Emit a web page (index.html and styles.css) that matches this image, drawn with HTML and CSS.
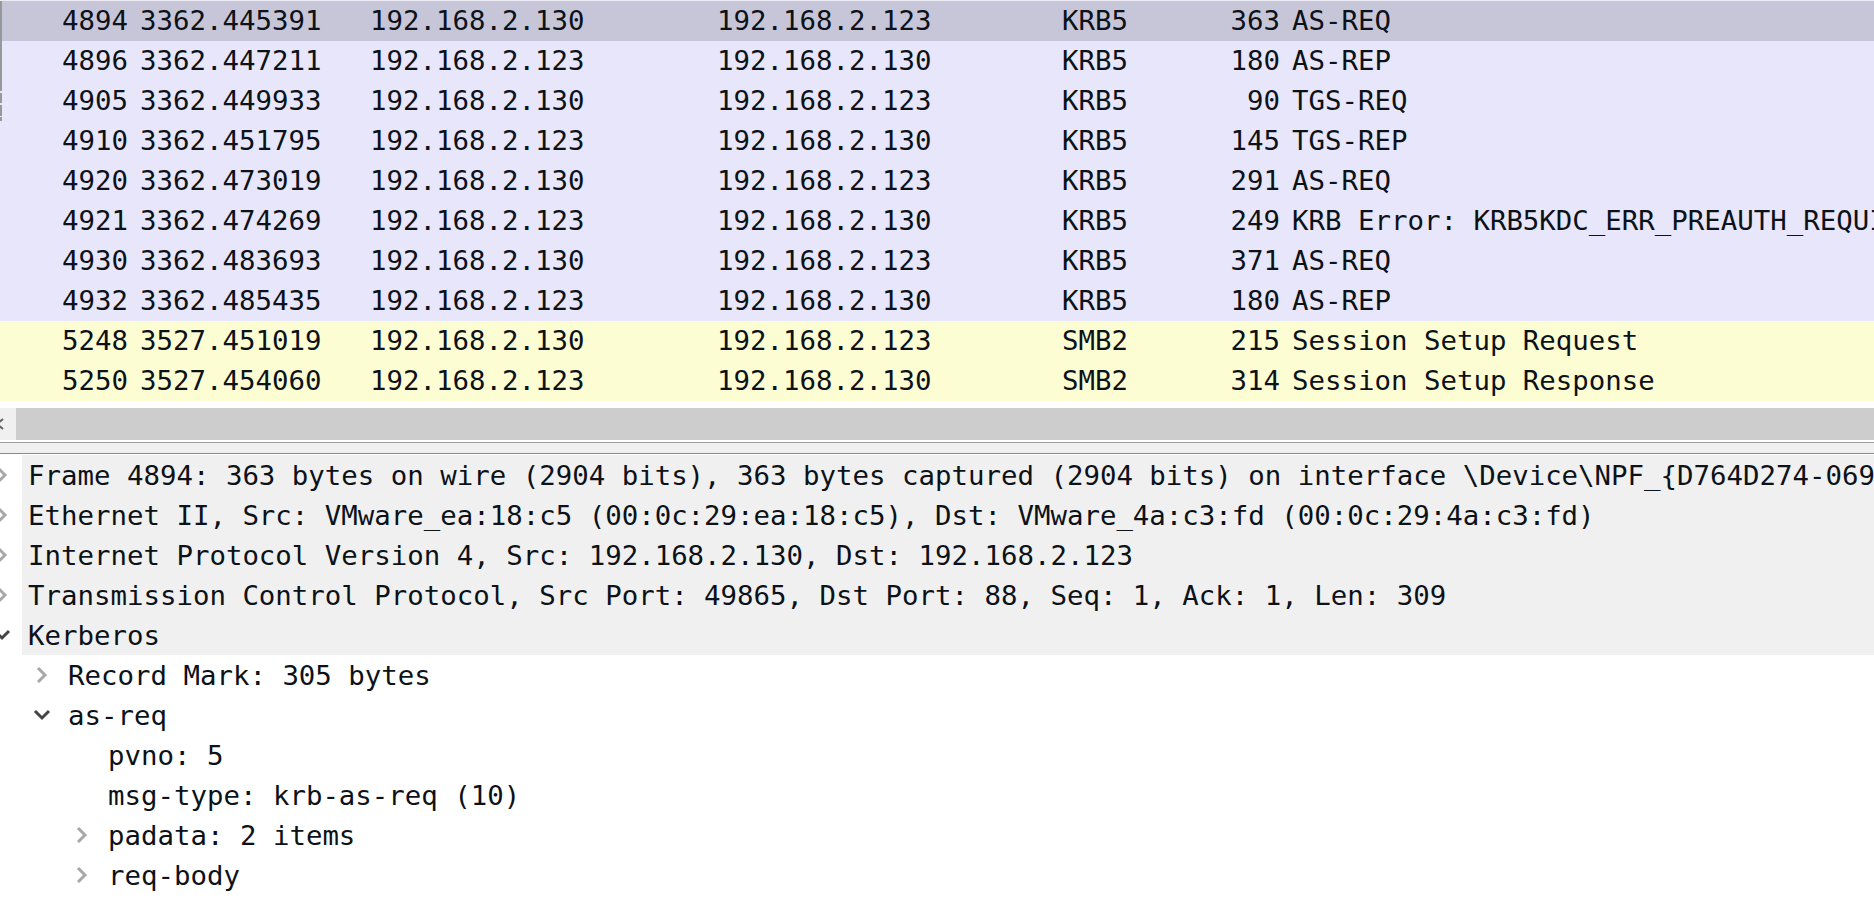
FILE: index.html
```html
<!DOCTYPE html>
<html>
<head>
<meta charset="utf-8">
<link rel="stylesheet" href="styles.css">
</head>
<body>
<div class="app">
  <div class="plist">
    <div class="marks">
      <span class="mk mk1"></span>
      <span class="mk mk2"></span>
      <span class="mk mk3"></span>
      <span class="mk mk4"></span>
    </div>
    <div class="row sel"><span class="c num">4894</span><span class="c">3362.445391</span><span class="c">192.168.2.130</span><span class="c">192.168.2.123</span><span class="c">KRB5</span><span class="c num">363</span><span class="c">AS-REQ</span></div>
    <div class="row krb"><span class="c num">4896</span><span class="c">3362.447211</span><span class="c">192.168.2.123</span><span class="c">192.168.2.130</span><span class="c">KRB5</span><span class="c num">180</span><span class="c">AS-REP</span></div>
    <div class="row krb"><span class="c num">4905</span><span class="c">3362.449933</span><span class="c">192.168.2.130</span><span class="c">192.168.2.123</span><span class="c">KRB5</span><span class="c num">90</span><span class="c">TGS-REQ</span></div>
    <div class="row krb"><span class="c num">4910</span><span class="c">3362.451795</span><span class="c">192.168.2.123</span><span class="c">192.168.2.130</span><span class="c">KRB5</span><span class="c num">145</span><span class="c">TGS-REP</span></div>
    <div class="row krb"><span class="c num">4920</span><span class="c">3362.473019</span><span class="c">192.168.2.130</span><span class="c">192.168.2.123</span><span class="c">KRB5</span><span class="c num">291</span><span class="c">AS-REQ</span></div>
    <div class="row krb"><span class="c num">4921</span><span class="c">3362.474269</span><span class="c">192.168.2.123</span><span class="c">192.168.2.130</span><span class="c">KRB5</span><span class="c num">249</span><span class="c">KRB Error: KRB5KDC_ERR_PREAUTH_REQUIRED</span></div>
    <div class="row krb"><span class="c num">4930</span><span class="c">3362.483693</span><span class="c">192.168.2.130</span><span class="c">192.168.2.123</span><span class="c">KRB5</span><span class="c num">371</span><span class="c">AS-REQ</span></div>
    <div class="row krb"><span class="c num">4932</span><span class="c">3362.485435</span><span class="c">192.168.2.123</span><span class="c">192.168.2.130</span><span class="c">KRB5</span><span class="c num">180</span><span class="c">AS-REP</span></div>
    <div class="row smb"><span class="c num">5248</span><span class="c">3527.451019</span><span class="c">192.168.2.130</span><span class="c">192.168.2.123</span><span class="c">SMB2</span><span class="c num">215</span><span class="c">Session Setup Request</span></div>
    <div class="row smb"><span class="c num">5250</span><span class="c">3527.454060</span><span class="c">192.168.2.123</span><span class="c">192.168.2.130</span><span class="c">SMB2</span><span class="c num">314</span><span class="c">Session Setup Response</span></div>
  </div>

  <div class="hscroll">
    <div class="hs-btn"><svg width="10" height="14" viewBox="0 0 10 14"><polyline points="7,2 1,7 7,12" fill="none" stroke="#606060" stroke-width="2"/></svg></div>
    <div class="hs-track"></div>
  </div>

  <div class="tree-head"></div>

  <div class="tree">
    <div class="node top"><span class="tw"><svg class="ar-c" width="12" height="18" viewBox="0 0 12 18"><polyline points="2,2 9,9 2,16"/></svg></span><span class="lbl">Frame 4894: 363 bytes on wire (2904 bits), 363 bytes captured (2904 bits) on interface \Device\NPF_{D764D274-069A-4B8E-9C1F-2E5A7D3B6C10}, id 0</span></div>
    <div class="node top"><span class="tw"><svg class="ar-c" width="12" height="18" viewBox="0 0 12 18"><polyline points="2,2 9,9 2,16"/></svg></span><span class="lbl">Ethernet II, Src: VMware_ea:18:c5 (00:0c:29:ea:18:c5), Dst: VMware_4a:c3:fd (00:0c:29:4a:c3:fd)</span></div>
    <div class="node top"><span class="tw"><svg class="ar-c" width="12" height="18" viewBox="0 0 12 18"><polyline points="2,2 9,9 2,16"/></svg></span><span class="lbl">Internet Protocol Version 4, Src: 192.168.2.130, Dst: 192.168.2.123</span></div>
    <div class="node top"><span class="tw"><svg class="ar-c" width="12" height="18" viewBox="0 0 12 18"><polyline points="2,2 9,9 2,16"/></svg></span><span class="lbl">Transmission Control Protocol, Src Port: 49865, Dst Port: 88, Seq: 1, Ack: 1, Len: 309</span></div>
    <div class="node top"><span class="tw"><svg class="ar-e" width="18" height="12" viewBox="0 0 18 12"><polyline points="2,2 9,9 16,2"/></svg></span><span class="lbl">Kerberos</span></div>
    <div class="node l1"><span class="tw"><svg class="ar-c" width="12" height="18" viewBox="0 0 12 18"><polyline points="2,2 9,9 2,16"/></svg></span><span class="lbl">Record Mark: 305 bytes</span></div>
    <div class="node l1"><span class="tw"><svg class="ar-e" width="18" height="12" viewBox="0 0 18 12"><polyline points="2,2 9,9 16,2"/></svg></span><span class="lbl">as-req</span></div>
    <div class="node l2"><span class="tw"></span><span class="lbl">pvno: 5</span></div>
    <div class="node l2"><span class="tw"></span><span class="lbl">msg-type: krb-as-req (10)</span></div>
    <div class="node l2"><span class="tw"><svg class="ar-c" width="12" height="18" viewBox="0 0 12 18"><polyline points="2,2 9,9 2,16"/></svg></span><span class="lbl">padata: 2 items</span></div>
    <div class="node l2"><span class="tw"><svg class="ar-c" width="12" height="18" viewBox="0 0 12 18"><polyline points="2,2 9,9 2,16"/></svg></span><span class="lbl">req-body</span></div>
  </div>
</div>
</body>
</html>
```

FILE: styles.css
```css
html, body {
  margin: 0;
  padding: 0;
  background: #ffffff;
}

.app {
  width: 1874px;
  height: 912px;
  overflow: hidden;
  font-family: "DejaVu Sans Mono", "Liberation Mono", monospace;
  font-size: 27.4px;
  color: #0c1218;
}

/* packet list */
.plist {
  position: relative;
  border-top: 1px solid #ecebf6;
}

.row {
  display: grid;
  grid-template-columns: 134px 230px 347px 345px 124px 106px 1fr;
  height: 40px;
  line-height: 40px;
  white-space: nowrap;
}

.row.sel { background: #c7c6d9; }
.row.krb { background: #e7e6fa; }
.row.smb { background: #fdfdd4; }

.c {
  padding: 0 6px;
  overflow: hidden;
}

.c.num { text-align: right; }
.row .c:last-child { overflow: visible; }

.marks {
  position: absolute;
  left: 0;
  top: 0;
  width: 2px;
  height: 121px;
  z-index: 2;
}

.mk {
  position: absolute;
  left: 0;
  width: 2px;
  background: #949a9c;
}
.mk1 { top: 0; height: 90px; }
.mk2 { top: 92px; height: 10px; }
.mk3 { top: 104px; height: 11px; }
.mk4 { top: 116px; height: 4px; }

/* horizontal scrollbar */
.hscroll {
  display: flex;
  height: 32px;
  margin-top: 7px;
}

.hs-btn {
  width: 16px;
  background: #f0f0f0;
  display: flex;
  align-items: center;
  overflow: hidden;
}

.hs-btn svg {
  margin-left: -4px;
}

.hs-track {
  flex: 1;
  background: #cdcdcd;
}

/* tree header strip */
.tree-head {
  height: 10px;
  margin-top: 2px;
  background: #f0f0f0;
  border-top: 1px solid #a0a0a0;
  border-bottom: 1px solid #8a8a8a;
  margin-bottom: 1px;
}

/* detail tree */
.tree {
  margin-left: -18px;
}

.node {
  display: flex;
  height: 40px;
  line-height: 40px;
  white-space: nowrap;
}

.node.l1 { padding-left: 40px; }
.node.l2 { padding-left: 80px; }

.tw {
  flex: 0 0 40px;
  display: flex;
  align-items: center;
  justify-content: center;
}

.lbl {
  flex: 1;
  padding-left: 6px;
  padding-top: 1px;
  line-height: 39px;
}

.node.top .lbl {
  background: #f0f0f0;
}

.ar-c polyline {
  fill: none;
  stroke: #a8a8a8;
  stroke-width: 3;
}

.ar-e polyline {
  fill: none;
  stroke: #444444;
  stroke-width: 3;
}
```
